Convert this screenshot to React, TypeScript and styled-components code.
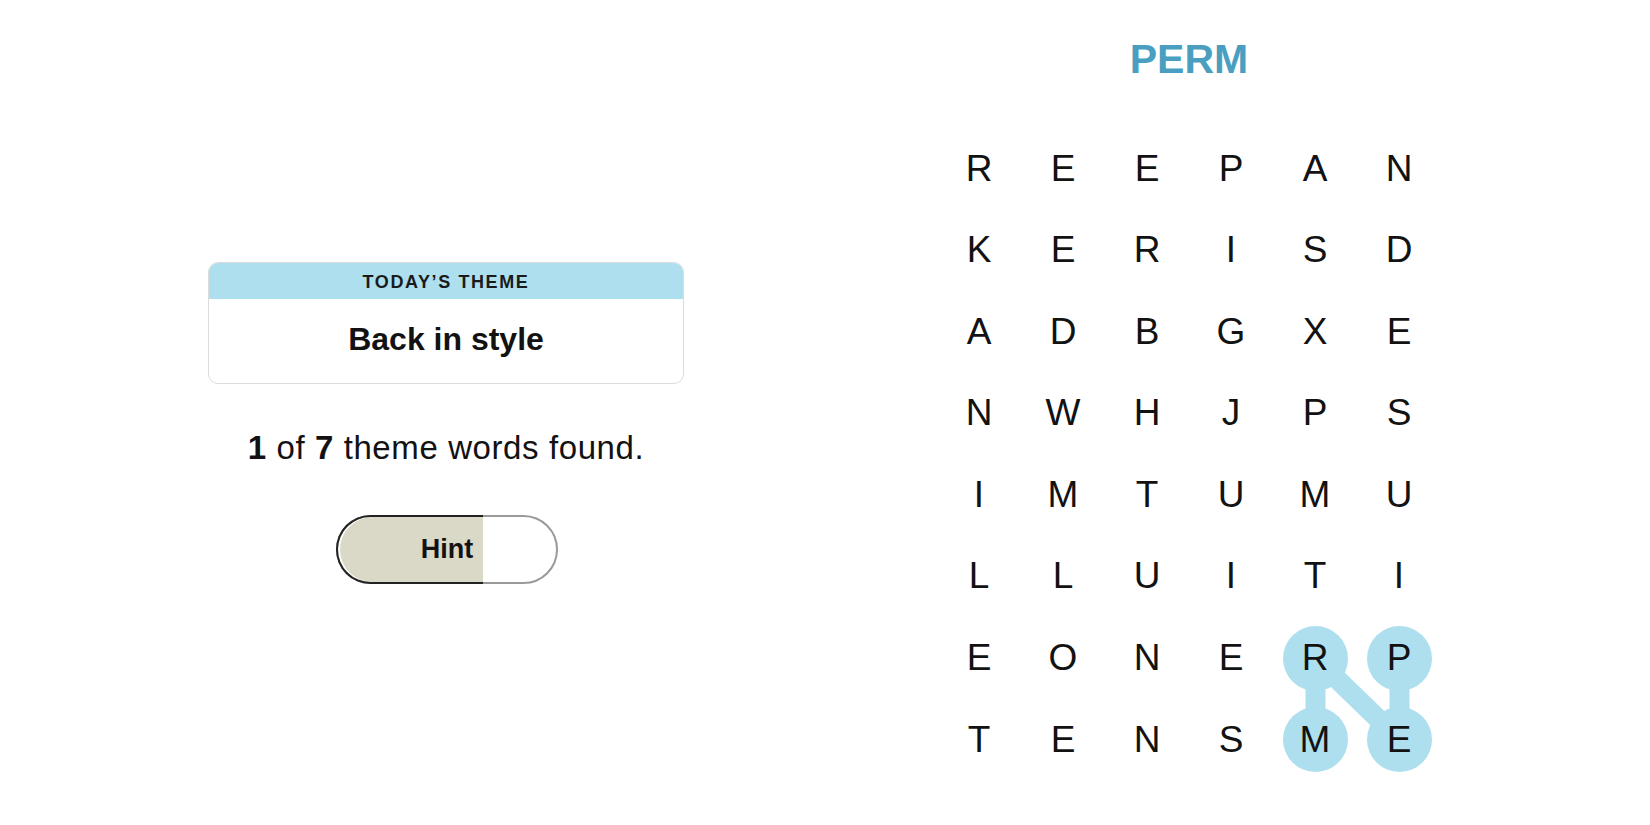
import styled, { createGlobalStyle } from 'styled-components';

const GlobalStyle = createGlobalStyle`
  body {
    margin: 0;
    background: #ffffff;
    font-family: 'Liberation Sans', Arial, sans-serif;
    color: #121212;
  }
`;

const LETTERS = [
  'REEPAN',
  'KERISD',
  'ADBGXE',
  'NWHJPS',
  'IMTUMU',
  'LLUITI',
  'EONERP',
  'TENSME',
];

// cells of the word already found, in the order it was traced
const FOUND_PATH: [number, number][] = [
  [6, 5],
  [7, 5],
  [6, 4],
  [7, 4],
];

const CELL = 65;
const COL_STEP = 84;
const ROW_STEP = 81.6;

function isFound(row: number, col: number) {
  return FOUND_PATH.some(([r, c]) => r === row && c === col);
}

function centerOf([row, col]: [number, number]) {
  return { x: col * COL_STEP + CELL / 2, y: row * ROW_STEP + CELL / 2 };
}

export default function App() {
  const points = FOUND_PATH.map(centerOf);

  return (
    <>
      <GlobalStyle />
      <Page>
        <LeftPanel>
          <ThemeCard>
            <ThemeHeader>TODAY’S THEME</ThemeHeader>
            <ThemeBody>Back in style</ThemeBody>
          </ThemeCard>

          <FoundText>
            <b>1</b> of <b>7</b> theme words found.
          </FoundText>

          <HintButton>
            <HintTrack />
            <HintFill $progress={66} />
            <HintLabel>Hint</HintLabel>
          </HintButton>
        </LeftPanel>

        <RightPanel>
          <CurrentWord>PERM</CurrentWord>
          <Board>
            <Connectors width={COL_STEP * 5 + CELL} height={ROW_STEP * 7 + CELL}>
              {points.slice(1).map((p, i) => (
                <line
                  key={i}
                  x1={points[i].x}
                  y1={points[i].y}
                  x2={p.x}
                  y2={p.y}
                  stroke="#aedfee"
                  strokeWidth={20}
                />
              ))}
            </Connectors>
            {LETTERS.map((row, r) =>
              row.split('').map((letter, c) => (
                <Cell key={`${r}-${c}`} $found={isFound(r, c)}>
                  {letter}
                </Cell>
              ))
            )}
          </Board>
        </RightPanel>
      </Page>
    </>
  );
}

const Page = styled.main`
  display: flex;
  width: 1650px;
  height: 825px;
  overflow: hidden;
`;

const LeftPanel = styled.section`
  display: flex;
  flex-direction: column;
  align-items: center;

  width: 892px;
  padding-top: 262px;
`;

const ThemeCard = styled.div`
  display: flex;
  flex-direction: column;

  width: 476px;
  border: 1px solid #dcdcdc;
  border-radius: 10px;
  overflow: hidden;
  box-sizing: border-box;
`;

const ThemeHeader = styled.div`
  height: 36px;
  background: #aedfee;

  font-size: 18px;
  font-weight: 600;
  letter-spacing: 1.6px;
  line-height: 38px;
  text-align: center;
  color: #1a1a1a;
`;

const ThemeBody = styled.div`
  height: 84px;

  font-size: 32px;
  font-weight: 700;
  line-height: 80px;
  text-align: center;
`;

const FoundText = styled.p`
  margin: 44px 0 0;

  font-size: 33px;
  line-height: 40px;
  letter-spacing: 0.6px;
  font-weight: 400;

  b {
    font-weight: 700;
  }
`;

const HintButton = styled.button`
  position: relative;
  display: flex;
  justify-content: center;
  align-items: center;

  width: 222px;
  height: 69px;
  margin: 47px 0 0 2px;
  padding: 0;

  border: none;
  border-radius: 35px;
  background: #ffffff;
  font-family: 'Liberation Sans', Arial, sans-serif;
`;

const HintTrack = styled.span`
  position: absolute;
  inset: 0;

  border: 2px solid #9a9a9a;
  border-radius: 35px;
`;

const HintFill = styled.span<{ $progress: number }>`
  position: absolute;
  top: 0;
  bottom: 0;
  left: 0;
  width: ${(p) => p.$progress}%;

  border: 2px solid #222222;
  border-right: none;
  border-radius: 35px 0 0 35px;
  background: #dad8c6;
  box-shadow: inset 2px 0 0 #ffffff;
  box-sizing: border-box;
`;

const HintLabel = styled.span`
  position: relative;

  font-size: 27px;
  font-weight: 700;
  color: #121212;
`;

const RightPanel = styled.section`
  display: flex;
  flex-direction: column;
  align-items: center;

  width: 485px;
  margin-left: 54.5px;
  padding-top: 34px;
`;

const CurrentWord = styled.h1`
  margin: 0;

  font-size: 41px;
  font-weight: 700;
  line-height: 50px;
  color: #4a9fc1;
`;

const Board = styled.div`
  position: relative;
  display: grid;
  grid-template-columns: repeat(6, ${CELL}px);
  grid-auto-rows: ${CELL}px;
  column-gap: ${COL_STEP - CELL}px;
  row-gap: ${ROW_STEP - CELL}px;

  margin-top: 52px;
`;

const Connectors = styled.svg`
  position: absolute;
  top: 0;
  left: 0;
  z-index: 0;
`;

const Cell = styled.div<{ $found: boolean }>`
  position: relative;
  z-index: 1;
  display: flex;
  justify-content: center;
  align-items: center;

  border-radius: 50%;
  background: ${(p) => (p.$found ? '#aedfee' : 'transparent')};

  font-size: 37px;
  font-weight: 400;
  color: #121212;
`;
